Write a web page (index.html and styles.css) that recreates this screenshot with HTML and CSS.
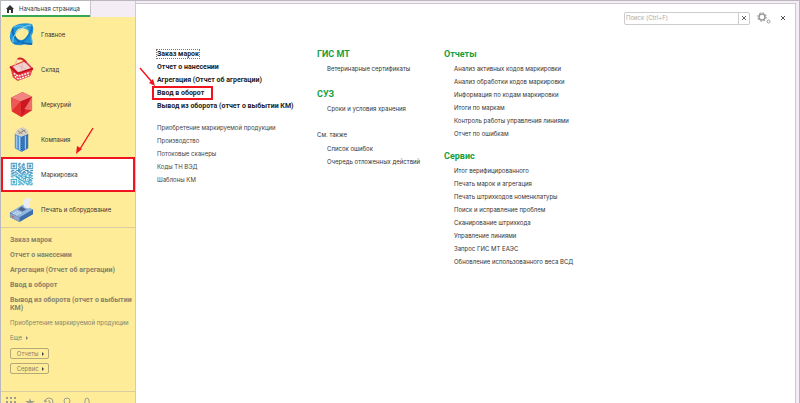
FILE: index.html
```html
<!DOCTYPE html>
<html lang="ru">
<head>
  <meta charset="UTF-8" />
  <meta name="viewport" content="width=device-width, initial-scale=1.0" />
  <title>Маркировка</title>
  <link rel="stylesheet" href="styles.css">
</head>
<body>
  <div class="app">
    <aside class="sidebar">
      <a class="home-tab" href="#">
        <svg class="home-icon" viewBox="0 0 8 8"><path d="M4 0L8 4H7V8H5V5H3V8H1V4H0Z" fill="#333"/></svg>
        Начальная страница
      </a>
      <nav class="sections">
        <a class="section" href="#">
          <svg viewBox="0 0 26 26">
            <path d="M4 5Q12 0 24 2Q27 9 23 15Q25 20 24 24Q18 21 14 24Q5 25 2 20Q-1 14 4 5Z" fill="#2496d8"/>
            <path d="M10 7Q16 5 20 9Q22 14 17 18Q11 20 7 17Q5 11 10 7Z" fill="#ffec98"/>
            <path d="M4 7Q3 14 10 20Q15 23 24 23" fill="none" stroke="#0f68b8" stroke-width="2"/>
            <path d="M5 5Q15 2 20 8Q24 13 24 21" fill="none" stroke="#5cc4e8" stroke-width="1"/>
            <path d="M23 3Q12 5 7 12Q3 17 4 21" fill="none" stroke="#8ad6ee" stroke-width="1"/>
            <path d="M24 5Q22 14 16 19Q11 23 5 22" fill="none" stroke="#1679c5" stroke-width="2"/>
          </svg>
          Главное
        </a>
        <a class="section" href="#">
          <svg viewBox="0 0 26 26">
            <path d="M1 10L17 3L25 12L22 20L9 25L4 21Z" fill="#e43f47"/>
            <path d="M4 10L16 5L23 12L10 17Z" fill="#f4d2cf"/>
            <path d="M1 10L9 17L25 12" fill="none" stroke="#c8101c" stroke-width="2"/>
            <path d="M5 17L10 20L22 16M6 20L10 23L21 19" fill="none" stroke="#fff" stroke-width="1.500" stroke-dasharray="2 1"/>
            <path d="M6 10L8 3Q11 0 15 2L23 9M10 9L18 13M14 6L13 15" fill="none" stroke="#d6b6b4" stroke-width="1"/>
            <path d="M9 2Q14 0 18 6" fill="none" stroke="#d3202b" stroke-width="2"/>
          </svg>
          Склад
        </a>
        <a class="section" href="#">
          <svg viewBox="0 0 26 26">
            <path d="M2 6L14 0L24 5V19L13 26L3 20Z" fill="#dc252c"/>
            <path d="M2 6L14 0L24 5L12 10Z" fill="#f38580"/>
            <path d="M2 6L12 10L3 20Z" fill="#ec5956"/>
            <path d="M12 10L24 5L13 26Z" fill="#c91820"/>
            <path d="M24 5V19L16 18Z" fill="#ef6c69"/>
            <path d="M12 10L13 26L3 20Z" fill="#e2312f"/>
          </svg>
          Меркурий
        </a>
        <a class="section" href="#">
          <svg viewBox="0 0 26 26">
            <path d="M6 7L13 10V26L6 22Z" fill="#5b97d6"/>
            <path d="M13 10L20 7V22L13 26Z" fill="#3674b8"/>
            <path d="M6 7L9 2L15 0L20 4V7L13 10Z" fill="#d9d2c4"/>
            <path d="M9 4L14 7M13 2L18 6M10 7L17 3" stroke="#8d8272" stroke-width="1"/>
            <path d="M8 9V22M11 10V24M17 9V23" stroke="#b5d7f3" stroke-width="1"/>
            <path d="M13 11V25" stroke="#243f68" stroke-width="1" stroke-dasharray="1 1"/>
          </svg>
          Компания
        </a>
        <a class="section section-active" href="#">
          <svg viewBox="-2 -1 28 28">
            <path fill="none" stroke="#2583b9" d="M0 .5h7m2 0h2m3 0h1m3 0h7M0 1.500h1m5 0h1m1 0h3m2 0h3m2 0h1m5 0h1M0 2.500h1m1 0h3m1 0h1m2 0h1m2 0h3m3 0h1m1 0h3m1 0h1M0 3.500h1m1 0h3m1 0h1m1 0h2m3 0h1m1 0h1m2 0h1m1 0h3m1 0h1M0 4.500h1m1 0h3m1 0h1m3 0h4m4 0h1m1 0h3m1 0h1M0 5.500h1m5 0h1m2 0h2m2 0h3m2 0h1m5 0h1M0 6.500h7m1 0h1m1 0h1m1 0h1m1 0h1m1 0h1m1 0h7M8 7.500h3m2 0h3M1 8.500h3m2 0h4m1 0h2m3 0h4m2 0h3M0 9.500h2m3 0h1m2 0h4m2 0h2m2 0h2m1 0h1M2 10.500h5m2 0h2m2 0h4m2 0h5M0 11.500h4m3 0h1m2 0h5m3 0h2m2 0h3M1 12.500h2m2 0h4m3 0h2m1 0h4m2 0h2"/>
            <path fill="none" stroke="#1d9ac2" d="M0 13.500h1m2 0h3m3 0h2m1 0h4m3 0h4M1 14.500h4m1 0h1m1 0h5m3 0h2m2 0h5M0 15.500h2m3 0h3m2 0h3m1 0h4m2 0h1m2 0h1M2 16.500h1m3 0h4m2 0h2m2 0h7M8 17.500h2m2 0h1m1 0h3m3 0h1m2 0h2M0 18.500h7m2 0h3m2 0h1m1 0h1m1 0h1m1 0h3M0 19.500h1m5 0h1m1 0h1m2 0h3m2 0h1m3 0h4M0 20.500h1m1 0h3m1 0h1m2 0h2m2 0h8m2 0h1M0 21.500h1m1 0h3m1 0h1m1 0h3m3 0h2m3 0h4M0 22.500h1m1 0h3m1 0h1m3 0h3m2 0h3m2 0h2m1 0h1M0 23.500h1m5 0h1m2 0h1m1 0h3m3 0h4m2 0h2M0 24.500h7m1 0h3m2 0h2m3 0h2m1 0h3"/>
          </svg>
          Маркировка
        </a>
        <a class="section" href="#">
          <svg viewBox="0 0 26 26">
            <path d="M1 16L14 9L25 13V18L11 26L1 21Z" fill="#3d6fae"/>
            <path d="M1 16L14 8L25 13L11 21Z" fill="#8fb6df"/>
            <path d="M16 11L15 3L21 0L23 3L21 5L21 12Z" fill="#e9edf2"/>
            <path d="M9 13L13 10L18 13L14 15Z" fill="#4b6488"/>
            <path d="M4 17L9 19M6 16L11 18M8 15L13 17" stroke="#eef4fa" stroke-width="1" stroke-dasharray="2 1"/>
            <path d="M1 17L11 21V26L1 21Z" fill="#8fa3c2"/>
            <path d="M3 20L5 21" stroke="#e04848" stroke-width="1"/>
          </svg>
          Печать и оборудование
        </a>
      </nav>
      <div class="quick">
        <a class="quick-main" href="#">Заказ марок</a>
        <a class="quick-main" href="#">Отчет о нанесении</a>
        <a class="quick-main" href="#">Агрегация (Отчет об агрегации)</a>
        <a class="quick-main" href="#">Ввод в оборот</a>
        <a class="quick-main" href="#">Вывод из оборота (отчет о выбытии КМ)</a>
        <a class="quick-link" href="#">Приобретение маркируемой продукции</a>
        <a class="quick-link" href="#">Еще <span class="caret"></span></a>
        <div class="quick-buttons">
          <button type="button">Отчеты <span class="caret"></span></button>
          <button type="button">Сервис <span class="caret"></span></button>
        </div>
      </div>
      <div class="tools">
        <button type="button" aria-label="Меню"><svg viewBox="0 0 10 10"><path d="M0 1h10M0 5h10M0 9h10" stroke="#9d9d91" stroke-width="2" stroke-dasharray="2 2"/></svg></button>
        <button type="button" aria-label="Избранное"><svg viewBox="0 0 10 10"><path d="M5 1L6 4H10L7 6L8 10L5 8L2 10L3 6L0 4H4Z" fill="#9d9d91"/></svg></button>
        <button type="button" aria-label="История"><svg viewBox="0 0 10 10"><path d="M1 5A4 4 0 1 1 5 9M0 3L1 5L3 4M5 3V5L7 6" fill="none" stroke="#9d9d91"/></svg></button>
        <button type="button" aria-label="Поиск"><svg viewBox="0 0 10 10"><circle cx="4" cy="4" r="3" fill="none" stroke="#9d9d91"/><path d="M6 6L9 10" stroke="#9d9d91" stroke-width="2"/></svg></button>
        <button type="button" aria-label="Уведомления"><svg viewBox="0 0 10 10"><path d="M1 8Q3 7 3 4Q3 1 5 1Q7 1 7 4Q7 7 9 8ZM4 9H6" fill="none" stroke="#9d9d91"/></svg></button>
      </div>
    </aside>

    <main class="panel">
      <div class="panel-bar">
        <div class="search">
          <input type="text" placeholder="Поиск (Ctrl+F)" aria-label="Поиск (Ctrl+F)" />
          <button type="button" aria-label="Очистить"><svg viewBox="0 0 4 4"><path d="M0 0L4 4M4 0L0 4" stroke="#666"/></svg></button>
        </div>
        <button class="settings" type="button" aria-label="Настройки">
          <svg viewBox="0 0 14 12" fill="none" stroke="#999">
            <circle cx="5" cy="5" r="3" stroke-width="1.500"/>
            <circle cx="5" cy="5" r="4.300" stroke-dasharray="1.700 1.680"/>
            <circle cx="11.500" cy="9.500" r="1.500"/>
          </svg>
        </button>
        <button class="close" type="button" aria-label="Закрыть"><svg viewBox="0 0 4 4"><path d="M0 0L4 4M4 0L0 4" stroke="#555"/></svg></button>
      </div>

      <div class="columns">
        <div class="column column-first">
          <ul class="links links-main">
            <li><a class="focused" href="#">Заказ марок</a></li>
            <li><a href="#">Отчет о нанесении</a></li>
            <li><a href="#">Агрегация (Отчет об агрегации)</a></li>
            <li><a class="marked" href="#">Ввод в оборот</a></li>
            <li><a href="#">Вывод из оборота (отчет о выбытии КМ)</a></li>
          </ul>
          <ul class="links">
            <li><a href="#">Приобретение маркируемой продукции</a></li>
            <li><a href="#">Производство</a></li>
            <li><a href="#">Потоковые сканеры</a></li>
            <li><a href="#">Коды ТН ВЭД</a></li>
            <li><a href="#">Шаблоны КМ</a></li>
          </ul>
        </div>
        <div class="column column-middle">
          <section>
            <h2>ГИС МТ</h2>
            <ul class="links">
              <li><a href="#">Ветеринарные сертификаты</a></li>
            </ul>
          </section>
          <section>
            <h2>СУЗ</h2>
            <ul class="links">
              <li><a href="#">Сроки и условия хранения</a></li>
            </ul>
          </section>
          <section>
            <h3>См. также</h3>
            <ul class="links">
              <li><a href="#">Список ошибок</a></li>
              <li><a href="#">Очередь отложенных действий</a></li>
            </ul>
          </section>
        </div>
        <div class="column">
          <section>
            <h2>Отчеты</h2>
            <ul class="links">
              <li><a href="#">Анализ активных кодов маркировки</a></li>
              <li><a href="#">Анализ обработки кодов маркировки</a></li>
              <li><a href="#">Информация по кодам маркировки</a></li>
              <li><a href="#">Итоги по маркам</a></li>
              <li><a href="#">Контроль работы управления линиями</a></li>
              <li><a href="#">Отчет по ошибкам</a></li>
            </ul>
          </section>
          <section>
            <h2>Сервис</h2>
            <ul class="links">
              <li><a href="#">Итог верифицированного</a></li>
              <li><a href="#">Печать марок и агрегация</a></li>
              <li><a href="#">Печать штрихкодов номенклатуры</a></li>
              <li><a href="#">Поиск и исправление проблем</a></li>
              <li><a href="#">Сканирование штрихкода</a></li>
              <li><a href="#">Управление линиями</a></li>
              <li><a href="#">Запрос ГИС МТ ЕАЭС</a></li>
              <li><a href="#">Обновление использованного веса ВСД</a></li>
            </ul>
          </section>
        </div>
      </div>
    </main>

    <!-- arrows over the page -->
    <svg class="arrows" width="160" height="160">
      <path d="M92 127L79 148M139 67L151 81" stroke="#f0141e" stroke-width="1.400"/>
      <path d="M75 153L76 145L81 148ZM154 85L148 82L152 78Z" fill="#f0141e"/>
    </svg>
  </div>
</body>
</html>
```
FILE: styles.css
```css
* {
  box-sizing: border-box;
}

body {
  margin: 0;
  background: #f5edf5;
  font-family: Inter, "Liberation Sans", Arial, sans-serif;
  font-size: 6px;
  line-height: 8px;
  color: #333;
}

a {
  color: inherit;
  text-decoration: none;
}

button {
  padding: 0;
  border: none;
  background: none;
  font: inherit;
  color: inherit;
  cursor: pointer;
}

svg {
  display: block;
  flex: none;
}

ul, h2, h3 {
  margin: 0;
  padding: 0;
  list-style: none;
}

.app {
  position: relative;
  display: flex;
  height: 100vh;
  overflow: hidden;
  border: 1px solid #bab8bd;
  border-bottom: none;
}

/* left side */
.sidebar {
  display: flex;
  flex-direction: column;
  flex: none;
  width: 135px;
  background: #ffec98;
  border-right: 1px solid #d8cda0;
}

.home-tab {
  display: flex;
  align-items: center;
  gap: 5px;
  height: 16px;
  padding-left: 5px;
  background: linear-gradient(to right, white 89px, #c9c3ca 89px, #c9c3ca 90px, #f5edf5 90px);
  position: relative;
}

.home-tab::after {
  content: "";
  position: absolute;
  left: 1px;
  bottom: 0;
  width: 88px;
  height: 2px;
  background: #36a854;
}

.home-icon {
  width: 8px;
  height: 8px;
}

.section {
  display: flex;
  align-items: center;
  gap: 7px;
  height: 35px;
  padding-left: 8px;
}

.section svg {
  width: 25px;
  height: 25px;
}

.section-active {
  background: white;
  outline: 2px solid #f0141e;
  outline-offset: -2px;
}

.quick {
  display: flex;
  flex-direction: column;
  gap: 7px;
  flex: 1;
  padding: 8px 0 0 9px;
  border-top: 1px solid #d8cda0;
  color: #85836c;
}

.quick-main,
.links-main,
h2 {
  font-family: Roboto, "Liberation Sans", sans-serif;
  font-size: 7px;
  font-weight: bold;
}

.quick-link {
  white-space: nowrap;
}

.caret {
  display: inline-block;
  margin-left: 2px;
  border: 2px solid transparent;
  border-left-color: currentColor;
  border-right: none;
}

.quick-buttons {
  display: flex;
  flex-direction: column;
  align-items: flex-start;
  gap: 4px;
  margin-top: -1px;
}

.quick-buttons button {
  width: 39px;
  height: 11px;
  padding-left: 2px;
  border: 1px solid #b3aa78;
  border-radius: 2px;
}

.quick-buttons .caret {
  color: #444;
}

.tools {
  display: flex;
  gap: 9px;
  height: 12px;
  padding: 5px 5px 0;
  border-top: 1px solid #d8cda0;
}

.tools svg {
  width: 10px;
  height: 10px;
}

/* menu panel */
.panel {
  flex: 1;
  margin: 2px 3px 0 0;
  background: white;
  border-top: 1px solid #cfc5d0;
  border-right: 1px solid #cfc5d0;
}

.panel-bar {
  display: flex;
  align-items: center;
  justify-content: flex-end;
  height: 28px;
  padding-right: 10px;
}

.search {
  display: flex;
  width: 126px;
  height: 13px;
  border: 1px solid #ccc;
  border-radius: 2px;
}

.search input {
  flex: 1;
  min-width: 0;
  padding: 0 1px;
  border: none;
  outline: none;
  background: none;
  font: inherit;
}

.search input::placeholder {
  color: #aaa;
}

.search button {
  display: grid;
  place-items: center;
  width: 11px;
  border-left: 1px solid #ccc;
}

.search button svg,
.close svg {
  width: 4px;
  height: 4px;
}

.settings {
  margin-left: 7px;
}

.settings svg {
  width: 14px;
  height: 12px;
}

.close {
  margin-left: 10px;
}

.columns {
  display: grid;
  grid-template-columns: 160px 127px 1fr;
  padding: 16px 21px;
}

.column-first {
  color: #444;
}

.links li {
  height: 13px;
  line-height: 13px;
  white-space: nowrap;
}

.column-first .links-main {
  margin-bottom: 8px;
  color: #222;
}

.focused {
  outline: 1px dotted #777;
}

.marked {
  padding: 2px 8px 2px 4px;
  margin-left: -4px;
  outline: 2px solid #f0141e;
  outline-offset: -1px;
}

section {
  margin-bottom: 10px;
}

.column-middle section {
  margin-bottom: 13px;
}

section .links {
  padding-left: 10px;
}

h2 {
  margin-bottom: 2px;
  font-size: 9px;
  line-height: 12px;
  color: #16a03c;
}

h3 {
  font-size: 6px;
  font-weight: normal;
  line-height: 14px;
}

.arrows {
  position: absolute;
  top: 0;
  left: 0;
  pointer-events: none;
}
```
